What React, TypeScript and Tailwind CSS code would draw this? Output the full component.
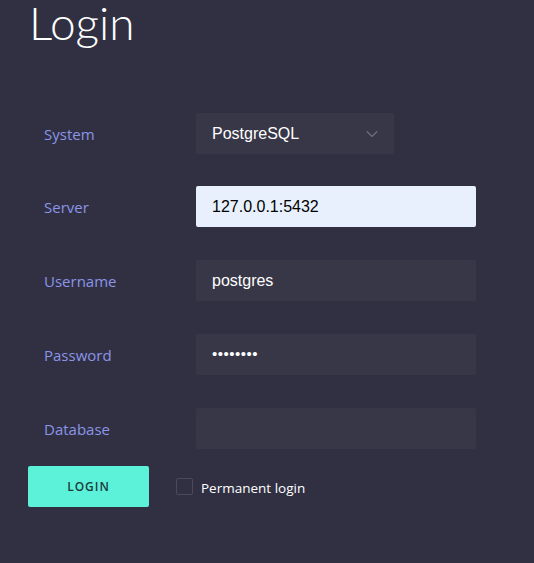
import { ChevronDown } from "lucide-react";

const ROWS = [
  { label: "Username", value: "postgres" },
  { label: "Password", value: "••••••••", secret: true },
  { label: "Database", value: "" },
];

function Label({ children }: { children: React.ReactNode }) {
  return (
    <div className="w-[196px] shrink-0 pl-[44px] pt-[1px] text-[15px] text-[#8a95e8] font-['Open_Sans',sans-serif]">
      {children}
    </div>
  );
}

export default function App() {
  return (
    <div className="w-[534px] h-[563px] bg-[#313042] overflow-hidden font-['Liberation_Sans',Arial,sans-serif]">
      <h1 className="pl-[29px] text-[46px] leading-[46px] font-light text-white font-['Lato',sans-serif]">
        Login
      </h1>

      <div className="mt-[67px] flex flex-col gap-[33px]">
        <div className="flex items-center">
          <Label>System</Label>
          <div className="w-[198px] h-[41px] rounded-[2px] bg-[#383748] flex items-center justify-between pl-[16px] pr-[12px] text-[16px] text-white">
            <span>PostgreSQL</span>
            <ChevronDown size={20} strokeWidth={1.4} className="text-[#6e6d80]" />
          </div>
        </div>

        <div className="-mt-[1px] flex items-center">
          <Label>Server</Label>
          <div className="w-[280px] h-[41px] rounded-[2px] bg-[#e8f0fe] flex items-center pl-[16px] text-[16px] text-black">
            127.0.0.1:5432
          </div>
        </div>

        {ROWS.map((row) => (
          <div key={row.label} className="flex items-center">
            <Label>{row.label}</Label>
            <div
              className={`w-[280px] h-[41px] rounded-[2px] bg-[#383748] flex items-center pl-[16px] text-white ${
                row.secret ? "text-[15px] tracking-[0.5px]" : "text-[16px]"
              }`}
            >
              {row.value}
            </div>
          </div>
        ))}
      </div>

      <div className="mt-[17px] flex items-center pl-[28px]">
        <button className="w-[121px] h-[41px] rounded-[2px] bg-[#5cf2da] text-[12px] font-semibold tracking-[1px] text-[#1d3b3a] font-['Open_Sans',sans-serif]">
          LOGIN
        </button>
        <label className="ml-[27px] flex items-center gap-[8px] text-[13.5px] text-white font-['Open_Sans',sans-serif]">
          <span className="w-[17px] h-[17px] rounded-[2px] border border-[#4b4a5c]" />
          <span className="mt-[3px]">Permanent login</span>
        </label>
      </div>
    </div>
  );
}
